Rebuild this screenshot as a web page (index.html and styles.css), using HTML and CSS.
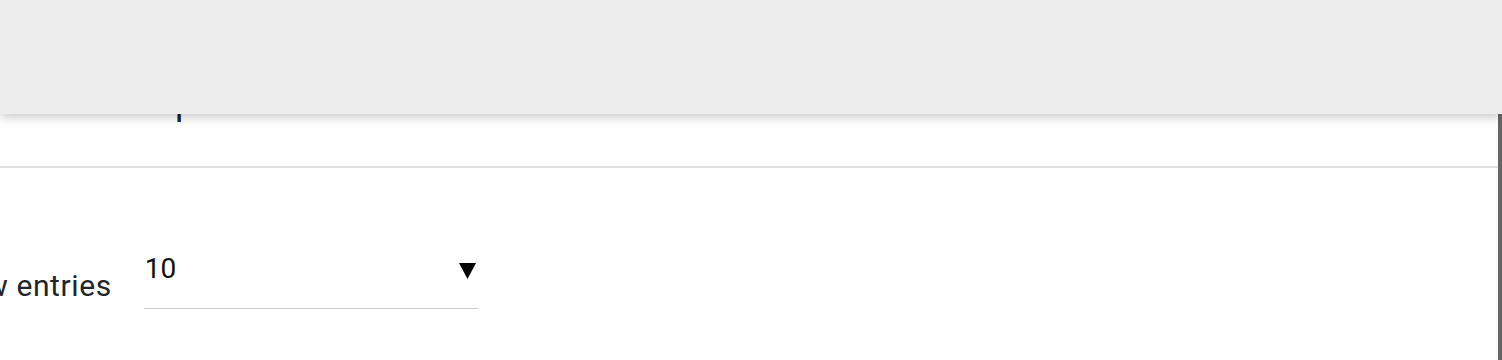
FILE: index.html
```html
<!DOCTYPE html>
<html lang="en">
<head>
<meta charset="utf-8">
<title>Entries</title>
<link rel="stylesheet" href="styles.css">
</head>
<body>
<header class="topbar"></header>
<main class="content">
  <div class="table-head">
    <span class="col col-first">Name</span>
    <span class="col col-second">position details</span>
  </div>
  <div class="controls">
    <label class="length-label">Show entries</label>
    <div class="select">
      <span class="select-value">10</span>
      <svg class="select-arrow" width="17" height="16" viewBox="0 0 17 16" aria-hidden="true"><path d="M0 0H17L8.5 16Z" fill="#000"/></svg>
    </div>
  </div>
</main>
</body>
</html>
```
FILE: styles.css
```css
html, body {
  margin: 0;
  padding: 0;
  background: #ffffff;
  overflow: hidden;
}
body {
  font-family: Roboto, "Liberation Sans", sans-serif;
  width: 1502px;
  height: 360px;
}
.topbar {
  position: fixed;
  top: 0;
  left: 0;
  right: 0;
  height: 114px;
  background: #ededed;
  box-shadow: 0 3px 10px rgba(0, 0, 0, 0.22);
  z-index: 2;
}
.content {
  height: 360px;
  box-sizing: border-box;
  border-right: 4px solid #666666;
}
.table-head {
  display: flex;
  height: 168px;
  box-sizing: border-box;
  padding-top: 82px;
  border-bottom: 2px solid #e0e0e0;
  font-size: 36px;
  line-height: 40px;
  color: #222222;
}
.col-first {
  margin-left: -62px;
  width: 237px;
}
.controls {
  display: flex;
  align-items: flex-start;
  gap: 32px;
  padding-top: 84px;
  margin-left: -68px;
}
.length-label {
  font-size: 30px;
  line-height: 34px;
  letter-spacing: 0.6px;
  color: #212529;
  padding-top: 17px;
}
.select {
  width: 334px;
  height: 57px;
  box-sizing: border-box;
  border-bottom: 1.5px solid #cccccc;
  display: flex;
  justify-content: space-between;
  align-items: flex-start;
}
.select-value {
  font-size: 28px;
  line-height: 34px;
  color: #111111;
  padding-left: 1px;
}
.select-arrow {
  margin-top: 11px;
  margin-right: 2px;
}
```
